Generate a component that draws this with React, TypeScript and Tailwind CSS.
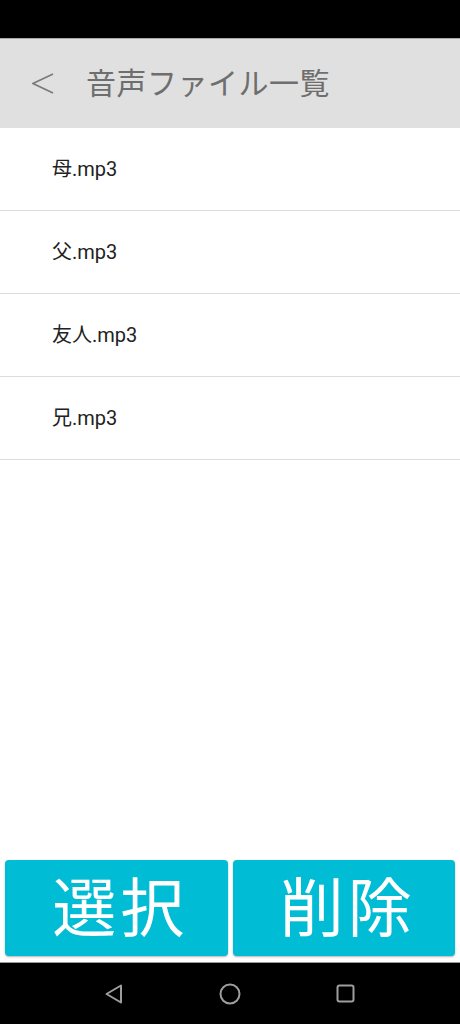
import React from 'react';

const files = ['母.mp3', '父.mp3', '友人.mp3', '兄.mp3'];

const font = { fontFamily: 'Roboto, "Noto Sans CJK JP", sans-serif' };

export default function App() {
  return (
    <div className="flex h-[1024px] w-[460px] flex-col overflow-hidden bg-white" style={font}>
      {/* status bar */}
      <div className="h-[38px] shrink-0 bg-black" />

      {/* header */}
      <header className="flex h-[90px] shrink-0 items-center border-t border-[#a8a8a8] bg-[#e0e0e0]">
        <svg className="ml-[32px] h-[22px] w-[22px]" viewBox="0 0 22 22" fill="none">
          <polyline points="21,1 1,10.5 21,20" stroke="#7a7a7a" strokeWidth="1.6" />
        </svg>
        <h1 className="ml-[32px] text-[30px] leading-none tracking-[0.5px] text-[#6e6e6e]">
          音声ファイル一覧
        </h1>
      </header>

      {/* file list */}
      <ul>
        {files.map((f) => (
          <li
            key={f}
            className="flex h-[83px] items-center border-b border-[#dcdcdc] pl-[52px] text-[20px] text-[#222]"
          >
            {f}
          </li>
        ))}
      </ul>

      <div className="flex-1" />

      {/* action buttons */}
      <div className="flex shrink-0 gap-[5px] px-[5px] pb-[6px]">
        <button className="flex h-[96px] flex-1 items-center justify-center rounded-[4px] bg-[#00bcd4] pl-[8px] pt-[4px] text-[64px] leading-none tracking-[4px] text-white shadow-[0_1px_2px_rgba(0,0,0,0.3)]">
          選択
        </button>
        <button className="flex h-[96px] flex-1 items-center justify-center rounded-[4px] bg-[#00bcd4] pl-[8px] pt-[4px] text-[64px] leading-none tracking-[4px] text-white shadow-[0_1px_2px_rgba(0,0,0,0.3)]">
          削除
        </button>
      </div>

      {/* nav bar */}
      <nav className="relative h-[62px] shrink-0 border-t border-[#9a9a9a] bg-black">
        <svg className="absolute left-[104px] top-[20px]" width="20" height="22" viewBox="0 0 20 22" fill="none">
          <path d="M17 2.5 L2.5 11 L17 19.5 Z" stroke="#9e9e9e" strokeWidth="2" strokeLinejoin="round" />
        </svg>
        <svg className="absolute left-[219px] top-[20px]" width="22" height="22" viewBox="0 0 22 22" fill="none">
          <circle cx="11" cy="11" r="9.5" stroke="#9e9e9e" strokeWidth="2" />
        </svg>
        <svg className="absolute left-[336px] top-[21px]" width="20" height="20" viewBox="0 0 20 20" fill="none">
          <rect x="1.5" y="1.5" width="16" height="16" rx="2" stroke="#9e9e9e" strokeWidth="2" />
        </svg>
      </nav>
    </div>
  );
}
